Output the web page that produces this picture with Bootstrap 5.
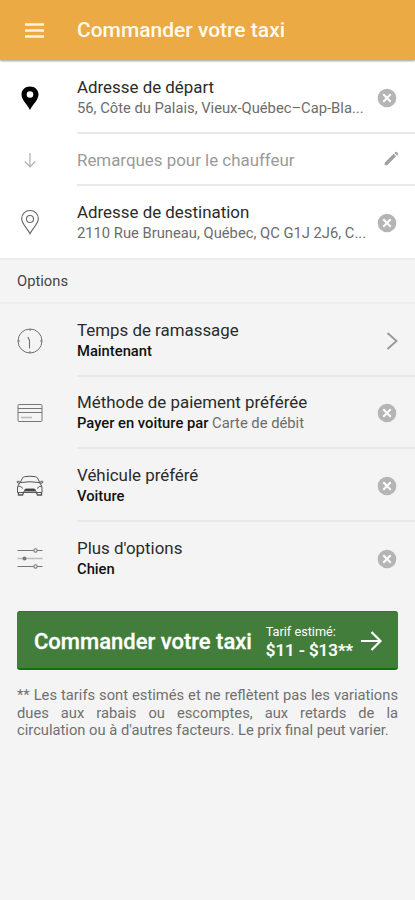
<!DOCTYPE html>
<html lang="fr">
<head>
<meta charset="utf-8">
<meta name="viewport" content="width=device-width, initial-scale=1">
<title>Commander votre taxi</title>
<link rel="stylesheet" href="https://cdn.jsdelivr.net/npm/bootstrap@5.3.0/dist/css/bootstrap.min.css">
<style>
body{font-family:Roboto,"Liberation Sans",sans-serif;background:#f4f4f4;color:#2b2b2b;min-height:900px;overflow-x:hidden}
.topbar{height:60px;background:#ecaa45;box-shadow:0 1px 2px rgba(0,0,0,.4);position:relative}
.lead-icon{width:77px;padding-left:15px;flex:none}
.lead-icon svg,.end-icon svg{display:block}
.topbar h1{font-size:21px;font-weight:500;color:#fffaf0;line-height:24px}
.entry{height:72.5px;padding-top:1px}
.trip .entry:first-child{height:74px}
.trip .entry:last-child{height:72px;padding-top:0}
.entry-body{border-bottom:2px solid #e9e9e9;min-width:0;padding-top:2px}
.entry-text{width:290px;flex:none}
.entry-title{font-size:16.9px;line-height:21px}
.entry-sub{font-size:14.75px;line-height:21px;color:#6c6c6c}
.entry-sub b{font-weight:500;color:#111}
.end-icon{width:30px;display:flex;justify-content:center;margin-right:13px}
.far-icon{margin-right:8px}
.trip .note-row{height:52px;padding-top:0}
.note-row .entry-title{color:#9a9a9a}
.section-head{height:46px;border-top:2px solid #ececec;border-bottom:2px solid #ededed;font-size:14.75px;color:#444}
.section-title{padding-left:17px;padding-top:1px}
.order{height:59px;margin:17px 17px 0;background:#437d3b;border:0;border-bottom:2px solid #156f12;border-top:1px solid #307329;border-radius:3px;color:#fff;padding:2px 16px 0 17px}
.order-label{font-size:22px;font-weight:500;line-height:26px;-webkit-text-stroke:.3px #fff;padding-top:1px}
.fare-label{font-size:12.7px;line-height:17px}
.fare{font-size:17px;font-weight:500;line-height:20px;-webkit-text-stroke:.2px #fff}
.legal{margin:17px 17px 0;font-size:14.72px;line-height:17.6px;color:#707070;text-align:justify}
</style>
<script src="https://cdn.jsdelivr.net/npm/bootstrap@5.3.0/dist/js/bootstrap.bundle.min.js"></script>
</head>
<body>
<svg class="d-none" aria-hidden="true">
<symbol id="clear" viewBox="0 0 20 20"><circle cx="10" cy="10" r="9.3" fill="#b5b5b5"/><path d="M6.300 6.300l7.400 7.400M13.700 6.300l-7.400 7.400" stroke="#fff" stroke-width="2"/></symbol>
</svg>
<header class="topbar d-flex align-items-center">
<div class="lead-icon"><svg width="30" height="30" viewBox="0 0 30 30"><path d="M10 9.500h19M10 15.500h19M10 21.500h19" stroke="#fff3df" stroke-width="2.300"/></svg></div>
<h1 class="m-0 text-nowrap">Commander votre taxi</h1>
</header>
<main>
<section class="trip bg-white">
<div class="entry d-flex align-items-stretch">
<div class="lead-icon d-flex align-items-center"><svg width="30" height="30" viewBox="0 0 30 30"><path fill="#000" fill-rule="evenodd" d="M15 3.500c-4.900 0-8.500 3.500-8.500 8 0 5.500 5.400 9.300 8.500 15.500 3.100-6.200 8.500-10 8.500-15.500 0-4.500-3.600-8-8.500-8zm0 4.700a3.300 3.300 0 1 1 0 6.600 3.300 3.300 0 0 1 0-6.600z"/></svg></div>
<div class="entry-body flex-grow-1 d-flex align-items-center"><div class="entry-text"><div class="entry-title">Adresse de départ</div><div class="entry-sub text-nowrap">56, Côte du Palais, Vieux-Québec–Cap-Bla...</div></div><div class="end-icon ms-auto"><svg width="20" height="20"><use href="#clear"/></svg></div></div>
</div>
<div class="entry note-row d-flex align-items-stretch">
<div class="lead-icon d-flex align-items-center"><svg width="30" height="30" viewBox="0 0 30 30"><path d="M15 8v14M9.800 16.500l5.200 5.500 5.200-5.500" fill="none" stroke="#b0b0b0" stroke-width="1.200"/></svg></div>
<div class="entry-body flex-grow-1 d-flex align-items-center"><div class="entry-text"><div class="entry-title">Remarques pour le chauffeur</div></div><div class="end-icon far-icon ms-auto"><svg width="20" height="20" viewBox="0 0 20 20"><path d="M2.700 12.700l8.900-8.900 2.500 2.500-8.900 8.900H2.700zM12.400 3l1-1q.6-.6 1.200 0l1.300 1.300q.6.600 0 1.200l-1 1z" fill="#a0a0a0"/></svg></div></div>
</div>
<div class="entry d-flex align-items-stretch">
<div class="lead-icon d-flex align-items-center"><svg width="30" height="30" viewBox="0 0 30 30"><path fill="none" stroke="#666" stroke-width="1.100" d="M15 3.500c-4.800 0-8.300 3.500-8.300 8 0 5.500 5.400 9.300 8.300 15.300 2.900-6 8.300-9.800 8.300-15.300 0-4.500-3.500-8-8.300-8z"/><circle cx="15" cy="12" r="3.500" fill="none" stroke="#666" stroke-width="1.100"/></svg></div>
<div class="entry-body border-0 flex-grow-1 d-flex align-items-center"><div class="entry-text"><div class="entry-title">Adresse de destination</div><div class="entry-sub text-nowrap">2110 Rue Bruneau, Québec, QC G1J 2J6, C...</div></div><div class="end-icon ms-auto"><svg width="20" height="20"><use href="#clear"/></svg></div></div>
</div>
</section>
<div class="section-head d-flex align-items-center"><span class="section-title">Options</span></div>
<section>
<div class="entry d-flex align-items-stretch">
<div class="lead-icon d-flex align-items-center"><svg width="30" height="30" viewBox="0 0 30 30" fill="none" stroke="#707070"><circle cx="15" cy="15" r="12"/><path d="M12.800 11l1.700 3.500v8" stroke-width="1.100"/><path d="M15 3v2M15 25v2M3 15h2M25 15h2"/></svg></div>
<div class="entry-body flex-grow-1 d-flex align-items-center"><div class="entry-text"><div class="entry-title">Temps de ramassage</div><div class="entry-sub"><b>Maintenant</b></div></div><div class="end-icon far-icon ms-auto"><svg width="20" height="20" viewBox="0 0 20 20"><path d="M5.500 2l9 8-9 8" fill="none" stroke="#999" stroke-width="1.900"/></svg></div></div>
</div>
<div class="entry d-flex align-items-stretch">
<div class="lead-icon d-flex align-items-center"><svg width="30" height="30" viewBox="0 0 30 30" fill="none" stroke="#777"><rect x="3" y="6.500" width="24" height="17" rx="1"/><path d="M3 10.500h24M3 14.500h24"/><path d="M6 19.500h11" stroke="#bbb" stroke-width="1.500"/></svg></div>
<div class="entry-body flex-grow-1 d-flex align-items-center"><div class="entry-text"><div class="entry-title">Méthode de paiement préférée</div><div class="entry-sub"><b>Payer en voiture par</b> Carte de débit</div></div><div class="end-icon ms-auto"><svg width="20" height="20"><use href="#clear"/></svg></div></div>
</div>
<div class="entry d-flex align-items-stretch">
<div class="lead-icon d-flex align-items-center"><svg width="30" height="30" viewBox="0 0 30 30" fill="none" stroke="#555" stroke-width="1"><path d="M5 12l2.500-5q.5-1 2-1.300 5.500-1 11 0 1.500.3 2 1.300l2.500 5M6 11.500q9-1.500 18 0M5.500 11.500q-3-2.500-3.500-.5 0 1.500 3 1.200M24.500 11.500q3-2.500 3.500-.5 0 1.500-3 1.200M5 12q-2.500 2-2.500 5v4.500h24.500V17q0-3-2.500-5"/><path d="M3 15q3 0 5 2.500M27 15q-3 0-5 2.500M8.500 21.500l1.500-3h10l1.500 3"/><path d="M10.500 18h9l1 2h-11z" fill="#333"/><path d="M3.500 21.500v2.500h4l1-2.500M26.500 21.500v2.500h-4l-1-2.500" stroke-width="1.300"/></svg></div>
<div class="entry-body flex-grow-1 d-flex align-items-center"><div class="entry-text"><div class="entry-title">Véhicule préféré</div><div class="entry-sub"><b>Voiture</b></div></div><div class="end-icon ms-auto"><svg width="20" height="20"><use href="#clear"/></svg></div></div>
</div>
<div class="entry d-flex align-items-stretch">
<div class="lead-icon d-flex align-items-center"><svg width="30" height="30" viewBox="0 0 30 30" fill="#f4f4f4" stroke="#777" stroke-width="1.100"><path d="M2.500 7.500h25M2.500 23.500h25"/><path d="M2.500 15.500h25" stroke="#bdbdbd" stroke-width="1.500"/><circle cx="20.500" cy="7.500" r="1.700"/><circle cx="20.500" cy="23.500" r="1.700"/><circle cx="9.500" cy="15.500" r="1.500" fill="#777"/></svg></div>
<div class="entry-body border-0 flex-grow-1 d-flex align-items-center"><div class="entry-text"><div class="entry-title">Plus d'options</div><div class="entry-sub"><b>Chien</b></div></div><div class="end-icon ms-auto"><svg width="20" height="20"><use href="#clear"/></svg></div></div>
</div>
</section>
<div class="d-flex"><button type="button" class="order flex-grow-1 d-flex align-items-center text-nowrap text-start"><span class="order-label">Commander votre taxi</span><span class="ms-auto"><span class="fare-label d-block">Tarif estimé:</span><span class="fare d-block">$11 - $13**</span></span><svg class="ms-2" width="21" height="22" viewBox="0 0 21 22"><path d="M0 11h19M10.500 2l9 9-9 9" fill="none" stroke="#fff" stroke-width="2.200"/></svg></button></div>
<p class="legal">** Les tarifs sont estimés et ne reflètent pas les variations dues aux rabais ou escomptes, aux retards de la circulation ou à d'autres facteurs. Le prix final peut varier.</p>
</main>
</body>
</html>
